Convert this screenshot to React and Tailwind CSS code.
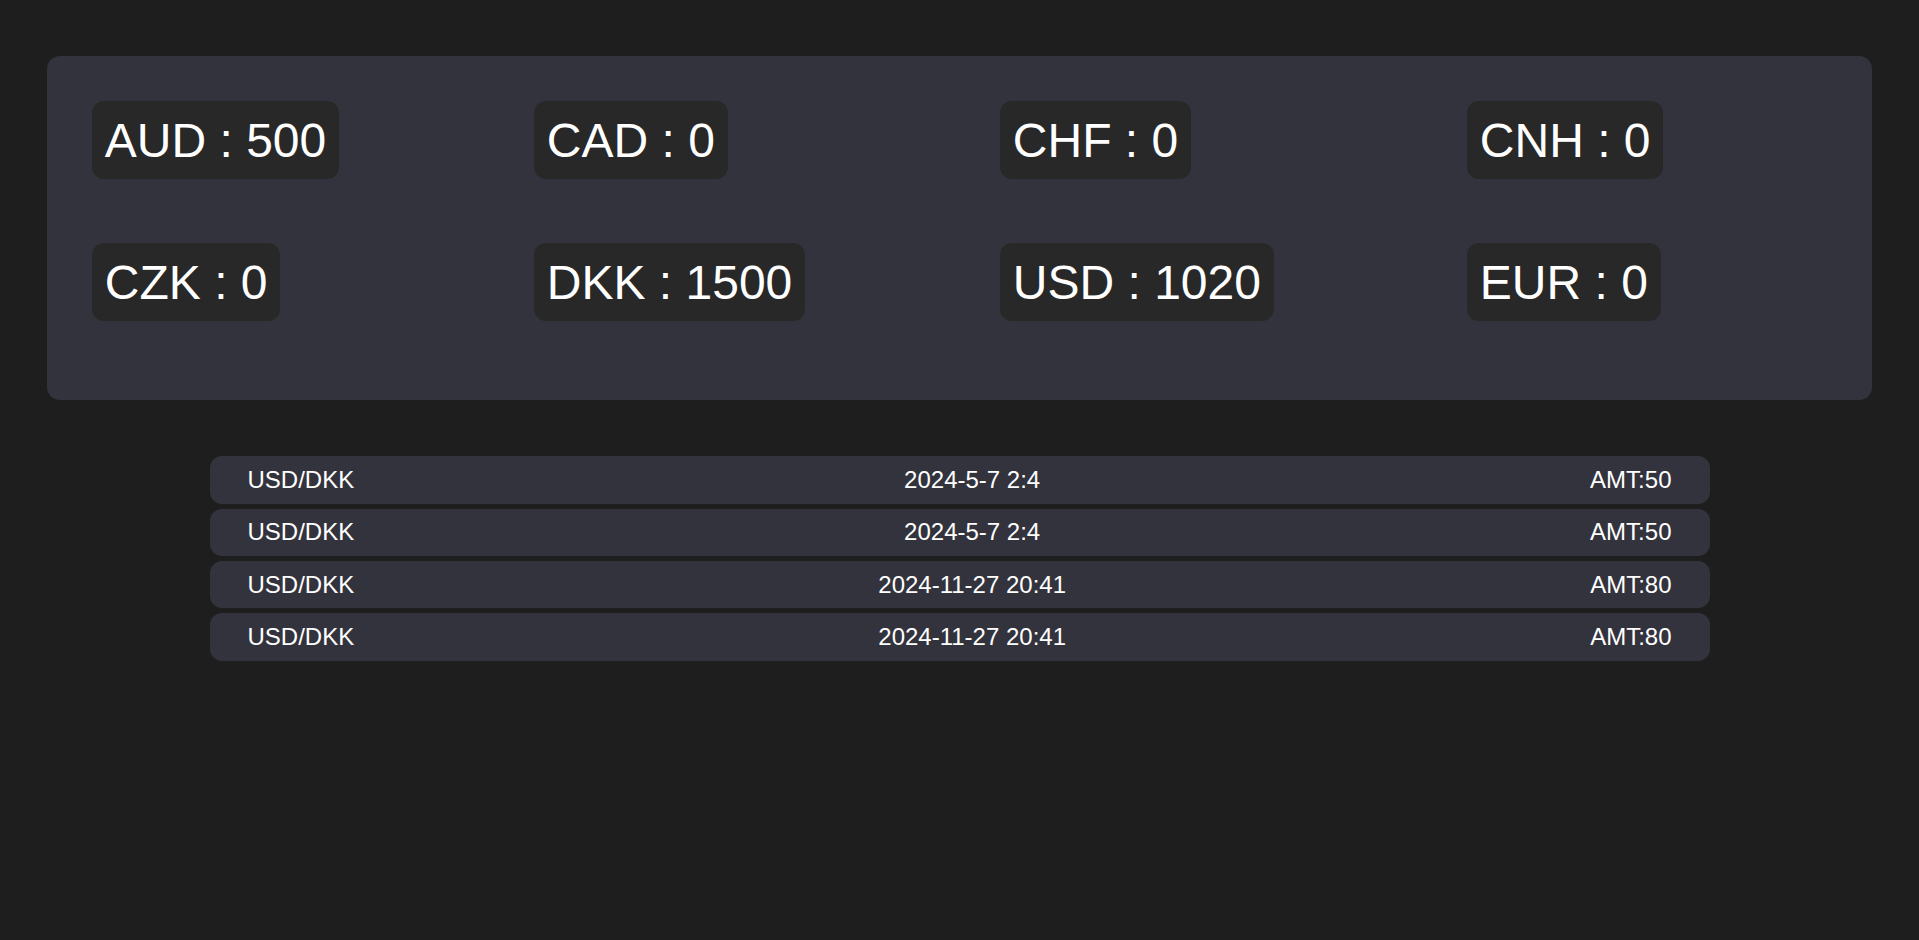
import React from 'react';

const balances = [
    { code: 'AUD', amount: 500 },
    { code: 'CAD', amount: 0 },
    { code: 'CHF', amount: 0 },
    { code: 'CNH', amount: 0 },
    { code: 'CZK', amount: 0 },
    { code: 'DKK', amount: 1500 },
    { code: 'USD', amount: 1020 },
    { code: 'EUR', amount: 0 },
];

const trades = [
    { pair: 'USD/DKK', time: '2024-5-7 2:4', amt: 50 },
    { pair: 'USD/DKK', time: '2024-5-7 2:4', amt: 50 },
    { pair: 'USD/DKK', time: '2024-11-27 20:41', amt: 80 },
    { pair: 'USD/DKK', time: '2024-11-27 20:41', amt: 80 },
];

const App = () => {
    return (
        <div className="min-h-screen bg-[#1e1e1e] text-white pt-[56px] font-['Liberation_Sans',Arial,sans-serif]">
            {/* Balances */}
            <div className="mx-[47px] rounded-[13px] bg-[#33333d] pl-[45px] pr-[45px] pt-[45px] pb-[79px]">
                <div className="grid grid-cols-[442px_466px_467px_1fr] gap-y-[64px] justify-items-start">
                    {balances.map((b) => (
                        <div
                            key={b.code}
                            className="rounded-xl bg-[#282828] px-[12.8px] py-[11.6px] text-[48px] leading-[normal] whitespace-nowrap"
                        >
                            {b.code} : {b.amount}
                        </div>
                    ))}
                </div>
            </div>

            {/* Trades */}
            <div className="mx-auto mt-[56px] w-[1500px] flex flex-col gap-[5px]">
                {trades.map((t, i) => (
                    <div
                        key={i}
                        className="flex items-center justify-between rounded-xl bg-[#33333d] px-[38px] h-[47.3px] text-[24px] leading-[normal]"
                    >
                        <span>{t.pair}</span>
                        <span>{t.time}</span>
                        <span>AMT:{t.amt}</span>
                    </div>
                ))}
            </div>
        </div>
    );
};

export default App;
